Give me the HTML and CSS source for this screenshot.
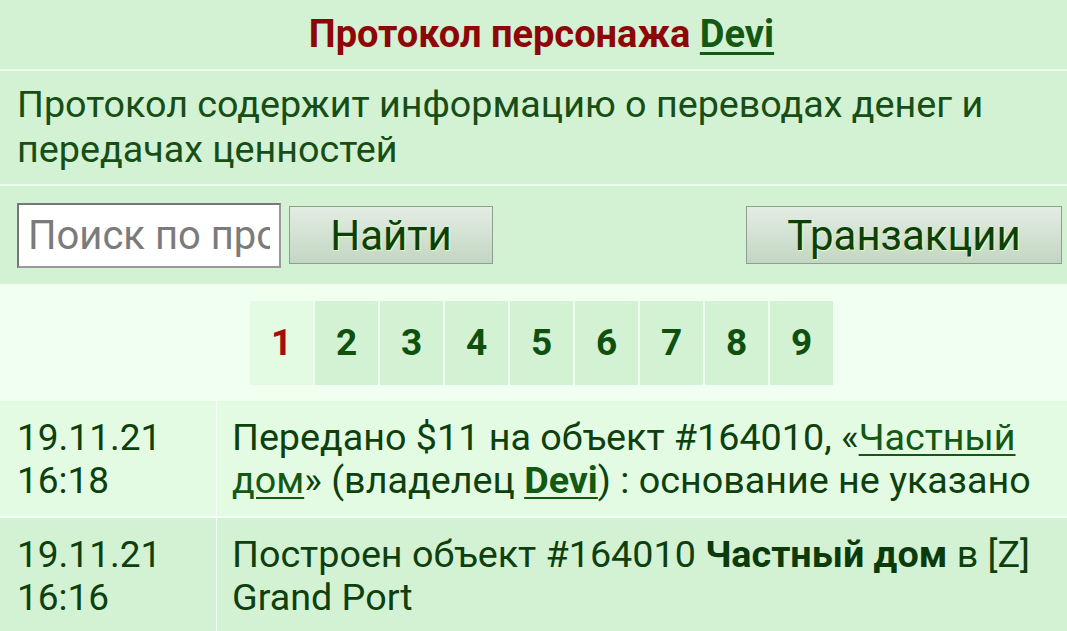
FILE: index.html
```html
<!DOCTYPE html>
<html lang="ru">
<head>
  <meta charset="UTF-8" />
  <meta name="viewport" content="width=device-width, initial-scale=1" />
  <title>Протокол персонажа Devi</title>
  <link rel="stylesheet" href="styles.css">
</head>
<body>

  <div class="head">
    Протокол персонажа <a href="#">Devi</a>
  </div>

  <div class="info">
    Протокол содержит информацию о переводах денег и передачах ценностей
  </div>

  <form class="search" onsubmit="return false">
    <input type="text" placeholder="Поиск по протоколу">
    <button class="btn btn-find">Найти</button>
    <button class="btn btn-trans">Транзакции</button>
  </form>

  <div class="pager-wrap">
    <div class="pager">
      <span class="current">1</span>
      <a href="#">2</a>
      <a href="#">3</a>
      <a href="#">4</a>
      <a href="#">5</a>
      <a href="#">6</a>
      <a href="#">7</a>
      <a href="#">8</a>
      <a href="#">9</a>
    </div>
  </div>

  <div class="log">
    <div class="row odd">
      <div class="date">19.11.21<br>16:18</div>
      <div class="text">Передано $11 на объект #164010, «<a href="#">Частный дом</a>» (владелец <a href="#" class="nick">Devi</a>) : основание не указано</div>
    </div>
    <div class="row even">
      <div class="date">19.11.21<br>16:16</div>
      <div class="text">Построен объект #164010 <b>Частный дом</b> в [Z] Grand Port</div>
    </div>
  </div>

</body>
</html>
```

FILE: styles.css
```css
* {
  box-sizing: border-box;
  margin: 0;
  padding: 0;
}

body {
  font-family: Roboto, 'Noto Sans', sans-serif;
  background-color: #f0fff0;
  color: #0d400d;
  overflow: hidden;
}

a {
  color: #135813;
}

/* top title bar */
.head {
  background-color: #d3f1d3;
  height: 71px;
  line-height: 69px;
  text-align: center;
  padding-left: 16px;
  font-size: 38px;
  font-weight: bold;
  color: #8e0606;
  border-bottom: 2px solid #ecfaec;
}

.head a {
  text-decoration-thickness: 3px;
  text-underline-offset: 5px;
}

.info {
  background-color: #d3f1d3;
  padding: 11px 17px 12px;
  font-size: 37.7px;
  line-height: 45px;
  color: #164e16;
  border-bottom: 2px solid #ecfaec;
}

/* search form */
.search {
  background-color: #d3f1d3;
  height: 98px;
  display: flex;
  align-items: center;
  gap: 8px;
  padding: 0 5px 0 17px;
}

.search input {
  width: 264px;
  height: 65px;
  border: 2px solid #8d8d8d;
  border-color: #777 #999 #999 #777;
  background: #fff;
  font-family: inherit;
  font-size: 40px;
  padding: 0 9px;
  color: #333;
}

.search input::placeholder {
  color: #7b7b7b;
}

.btn {
  height: 58px;
  border: 1px solid #8f9f8f;
  background: linear-gradient(#e3ede3, #c3d6c3);
  font-family: inherit;
  font-size: 42px;
  color: #0b400b;
  text-shadow: 1px 1px 1px #eaffb8;
  cursor: pointer;
}

.btn-find {
  width: 204px;
}

.btn-trans {
  width: 316px;
  margin-left: auto;
}

/* pages */
.pager-wrap {
  height: 117px;
  display: flex;
  justify-content: center;
  align-items: center;
  padding-left: 16px;
}

.pager {
  display: flex;
  gap: 2px;
}

.pager a,
.pager span {
  width: 63px;
  height: 84px;
  display: flex;
  align-items: center;
  justify-content: center;
  font-size: 37px;
  font-weight: bold;
  text-decoration: none;
  background-color: #d3f1d3;
  color: #0f500f;
}

.pager .current {
  background-color: #e2fbe2;
  color: #a30d0d;
}

/* log table */
.log {
  display: flex;
  flex-direction: column;
  gap: 2px;
  background-color: #f5fff5;
}

.row {
  display: grid;
  grid-template-columns: 216px 1fr;
  column-gap: 1px;
  font-size: 37.7px;
  line-height: 43px;
}

.row > div {
  padding: 15px 17px 14px;
}

.row .date {
  font-size: 37px;
}

.row.odd > div {
  background-color: #e2fbe2;
}

.row.even > div {
  background-color: #d3f1d3;
}

.row .text {
  padding-left: 15px;
  padding-right: 10px;
}

.row a {
  text-decoration-thickness: 2px;
  text-underline-offset: 4px;
}

.row .nick {
  font-weight: bold;
}

.row b {
  color: #0b3a0b;
}
```
